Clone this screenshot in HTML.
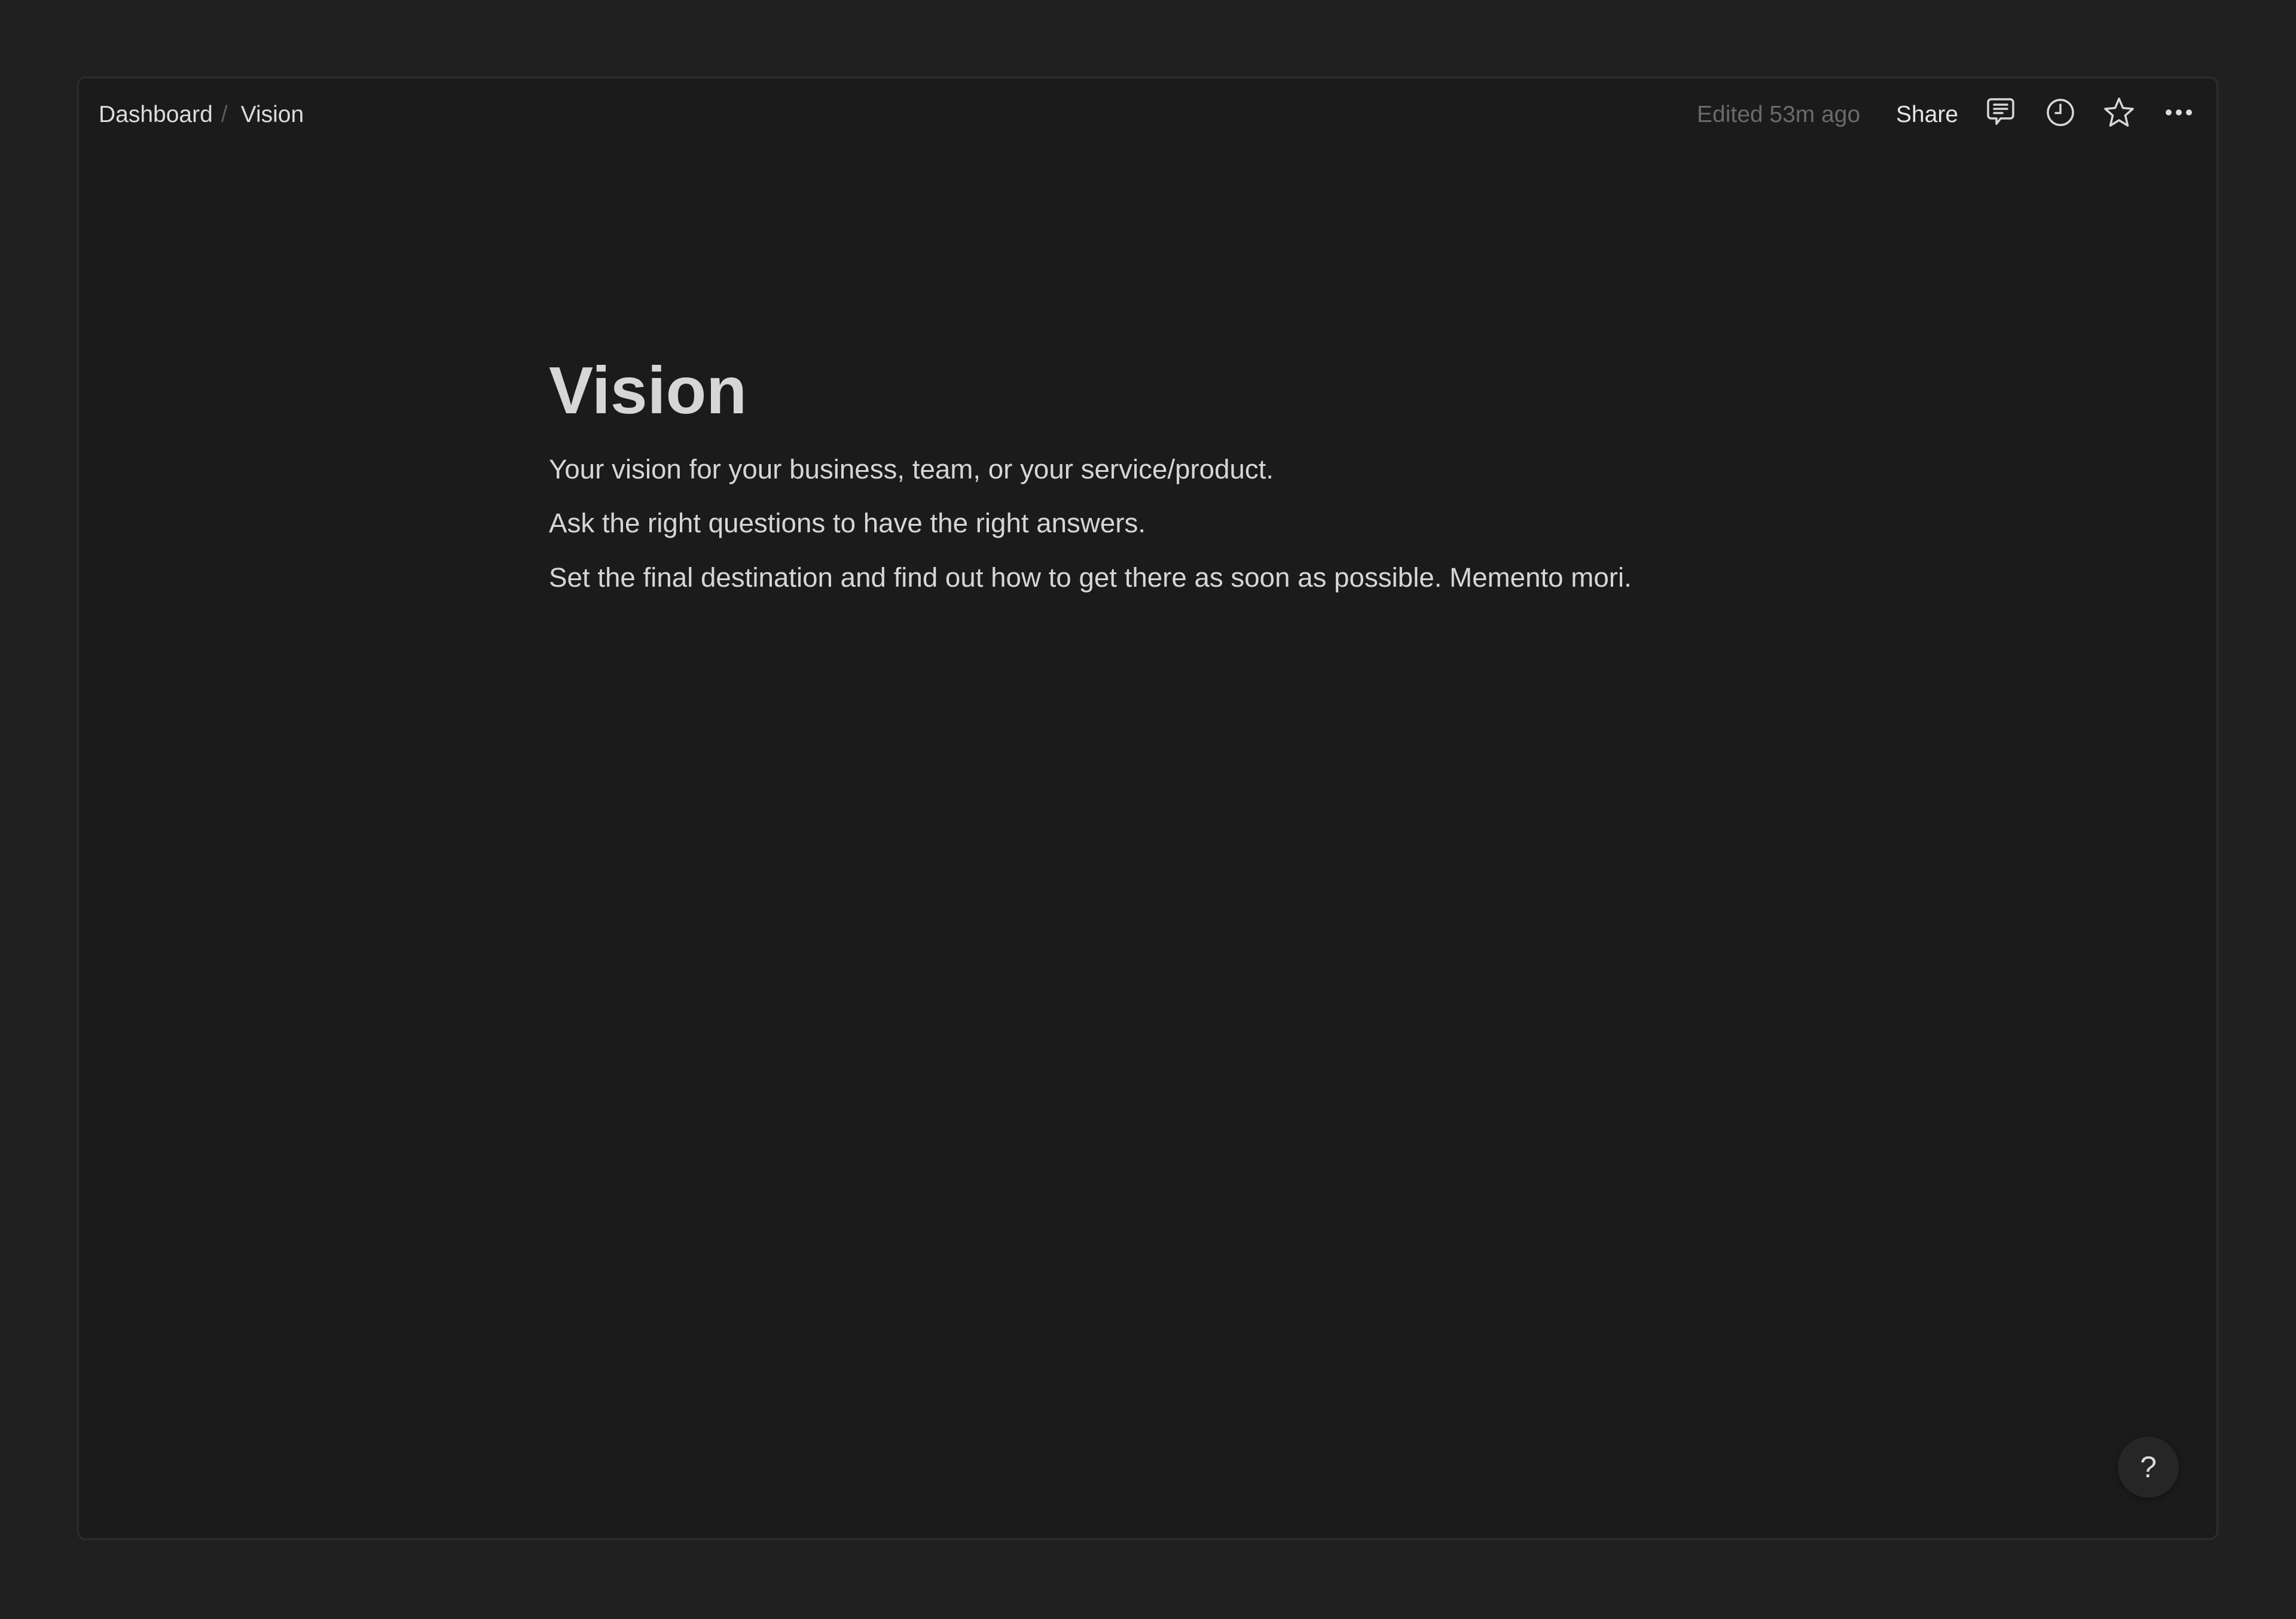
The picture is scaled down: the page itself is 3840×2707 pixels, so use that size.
<!DOCTYPE html>
<html><head><meta charset="utf-8"><style>
html,body{margin:0;padding:0;background:#202020;width:3840px;height:2707px;overflow:hidden;font-family:"Segoe UI","Liberation Sans",sans-serif;}
.panel{position:absolute;left:129px;top:128px;width:3581px;height:2447px;background:#1b1b1b;border:3px solid #2d2d2d;border-radius:14px;box-sizing:border-box;}
.t{position:absolute;line-height:1;white-space:nowrap;}
.ic{position:absolute;top:162px;}
</style></head><body>
<div class="panel"></div>
<div class="t" style="left:165px;top:172px;font-size:39px;color:#dcdcdc">Dashboard<span style="color:#5a5a5a;margin:0 22px 0 14px">/</span>Vision</div>
<div class="t" style="left:2838px;top:172px;font-size:39px;color:#6a6a6a">Edited 53m ago</div>
<div class="t" style="left:3171px;top:172px;font-size:39px;color:#e6e6e6">Share</div>
<svg class="ic" style="left:3320px" width="52" height="52" viewBox="0 0 52 52" fill="none" stroke="#d8d8d8" stroke-width="3.5" stroke-linejoin="round" stroke-linecap="round"><path d="M10 4h32a5 5 0 0 1 5 5v22a5 5 0 0 1-5 5H26l-7 9v-9h-9a5 5 0 0 1-5-5V9a5 5 0 0 1 5-5z"/><path d="M15 13h22M15 20h22M15 27h14"/></svg>
<svg class="ic" style="left:3420px" width="52" height="52" viewBox="0 0 52 52" fill="none" stroke="#d8d8d8" stroke-width="3.5" stroke-linecap="round"><circle cx="26" cy="26" r="21"/><path d="M26 13v14h-8"/></svg>
<svg class="ic" style="left:3518px" width="52" height="52" viewBox="0 0 52 52" fill="none" stroke="#d8d8d8" stroke-width="3.5" stroke-linejoin="round"><path d="M26 3l6.5 15.5 16.5 1.5-12.5 11 4 17L26 39l-14.5 9 4-17L3 20l16.5-1.5z"/></svg>
<svg class="ic" style="left:3618px" width="52" height="52" viewBox="0 0 52 52" fill="#dcdcdc"><circle cx="9" cy="26" r="5"/><circle cx="26" cy="26" r="5"/><circle cx="43" cy="26" r="5"/></svg>
<div class="t" style="left:918px;top:598px;font-size:111px;font-weight:bold;color:#d6d6d6">Vision</div>
<div class="t" style="left:918px;top:762px;font-size:45.7px;color:#d6d6d6">Your vision for your business, team, or your service/product.</div>
<div class="t" style="left:918px;top:852px;font-size:45.7px;color:#d6d6d6">Ask the right questions to have the right answers.</div>
<div class="t" style="left:918px;top:943px;font-size:45.7px;color:#d6d6d6">Set the final destination and find out how to get there as soon as possible. Memento mori.</div>
<div style="position:absolute;left:3542px;top:2402px;width:102px;height:102px;border-radius:50%;background:#262626;box-shadow:0 3px 10px rgba(0,0,0,.35);color:#dcdcdc;font-size:50px;line-height:102px;text-align:center;">?</div>
</body></html>
